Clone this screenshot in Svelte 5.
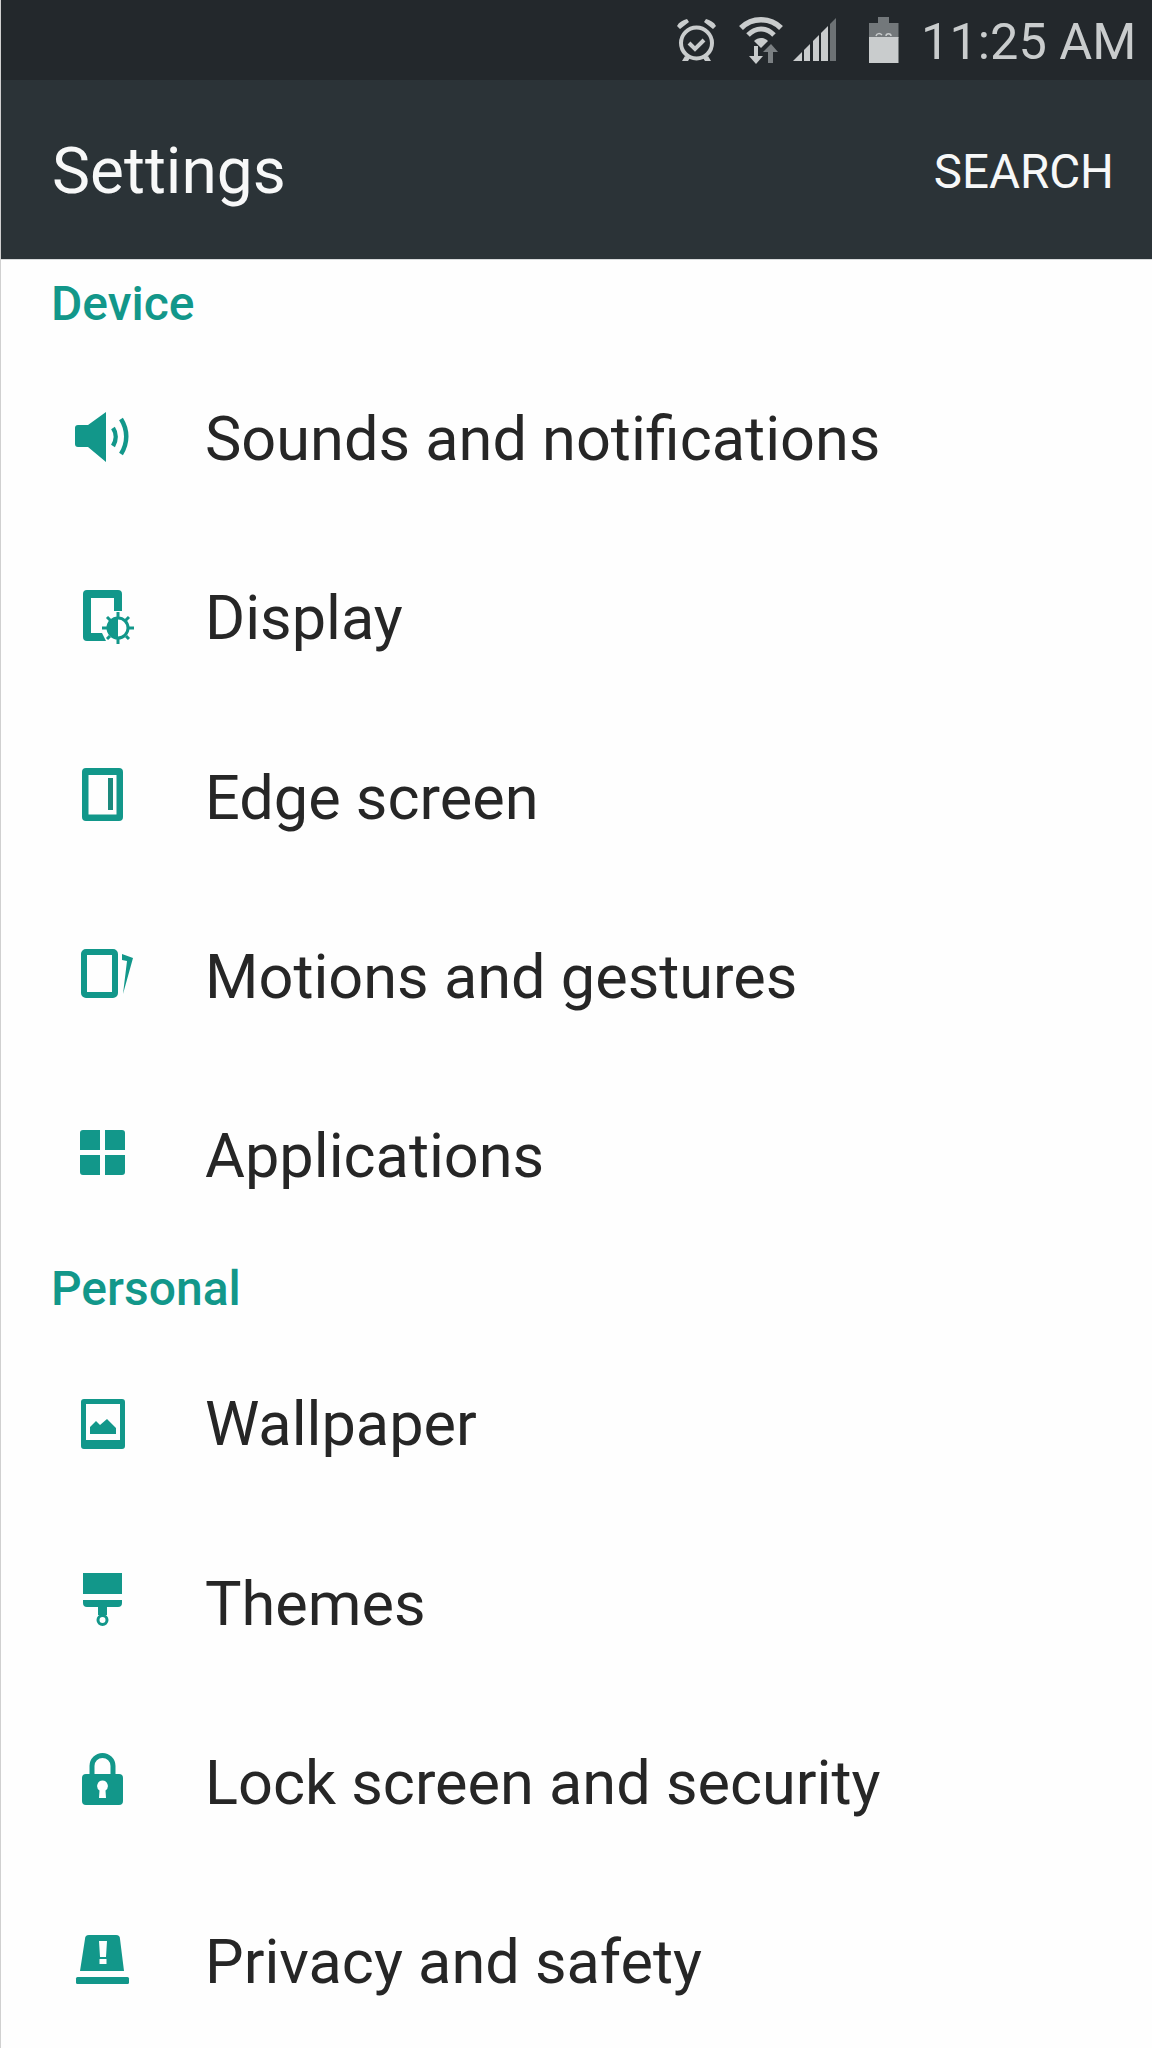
<script>
  // settings rows, grouped by category
  const groups = [
    {
      title: 'Device',
      rows: [
        { icon: 'sound', label: 'Sounds and notifications' },
        { icon: 'display', label: 'Display' },
        { icon: 'edge', label: 'Edge screen' },
        { icon: 'motion', label: 'Motions and gestures' },
        { icon: 'apps', label: 'Applications' }
      ]
    },
    {
      title: 'Personal',
      rows: [
        { icon: 'wallpaper', label: 'Wallpaper' },
        { icon: 'themes', label: 'Themes' },
        { icon: 'lock', label: 'Lock screen and security' },
        { icon: 'privacy', label: 'Privacy and safety' }
      ]
    }
  ];
</script>

<div class="screen">
  <div class="statusbar">
    <!-- alarm -->
    <svg class="st alarm" viewBox="0 0 40 44" width="40" height="44">
      <circle cx="19.500" cy="25" r="15.500" fill="none" stroke="currentColor" stroke-width="4" />
      <path d="M12 25l6 6 9-9" fill="none" stroke="currentColor" stroke-width="4" />
      <path d="M0 8C2 4 6 2 10 1l2 3-9 7zM39 8C37 4 33 2 29 1l-2 3 9 7z" fill="currentColor" />
      <path d="M8 38l-3 5h6l2-3zM31 38l3 5h-6l-2-3z" fill="currentColor" />
    </svg>
    <!-- wifi with up/down arrows -->
    <svg class="st wifi" viewBox="0 0 46 48" width="46" height="48">
      <path d="M3 12C14 1 32 1 43 12" fill="none" stroke="currentColor" stroke-width="5.500" />
      <path d="M10 19C18 11 28 11 36 19" fill="none" stroke="currentColor" stroke-width="5" />
      <path d="M16 25C20 21 26 21 30 25l-7 7z" fill="currentColor" />
      <path d="M16 30h4v10h5l-7 8-7-8h5z" fill="currentColor" />
      <path d="M30 47V36h-5l8-8 7 8h-5v11z" fill="#7b8083" />
    </svg>
    <!-- signal -->
    <svg class="st signal" viewBox="0 0 44 44" width="44" height="44">
      <path d="M0 43L9 34V43z" fill="currentColor" />
      <path d="M11 43V32L17 26V43z" fill="currentColor" />
      <path d="M20 43V23L26 17V43z" fill="currentColor" />
      <path d="M28 43V15L35 8V43z" fill="currentColor" />
      <path d="M37 43V6L43 0V43z" fill="#6d7275" />
    </svg>
    <!-- battery -->
    <svg class="st battery" viewBox="0 0 30 46" width="30" height="46">
      <path d="M9 0h11v6h9.500v15H0V6h9z" fill="#73787b" />
      <path d="M0 20h29.500v26H0z" fill="currentColor" />
      <path d="M7 19c1-3 4-3 6-1M17 19c0-3 5-3 5 0" fill="none" stroke="currentColor" stroke-width="1.500" />
    </svg>
    <span class="time">11:25 AM</span>
  </div>

  <div class="toolbar">
    <span class="title">Settings</span>
    <span class="search">SEARCH</span>
  </div>

  <div class="list">
    {#each groups as group}
      <div class="category">{group.title}</div>
      {#each group.rows as row}
        <div class="row">
          <svg class="icon" viewBox="0 0 80 80" width="80" height="80">
            {#if row.icon === 'sound'}
              <path d="M11 29a3 3 0 0 1 3-3H24L42 13V63L24 48H14a3 3 0 0 1-3-3z" />
              <path d="M49 29c3.500 5 3.500 12 0 18M57 20c7 11 7 24 0 35" fill="none" stroke="currentColor" stroke-width="4.500" />
            {:else if row.icon === 'display'}
              <path d="M23 12H54a4 4 0 0 1 4 4V33H50V20H27V55H38L42 63H23a4 4 0 0 1-4-4V16a4 4 0 0 1 4-4z" />
              <circle cx="54" cy="50" r="10" fill="#fff" stroke="currentColor" stroke-width="3" />
              <path d="M54 40a10 10 0 0 0 0 20z" />
              <path d="M54 34v32M38 50h32M43 39l22 22M65 39L43 61" fill="none" stroke="currentColor" stroke-width="3" stroke-dasharray="5 22" />
            {:else if row.icon === 'edge'}
              <path fill-rule="evenodd" d="M22 11H55a4 4 0 0 1 4 4V60a4 4 0 0 1-4 4H22a4 4 0 0 1-4-4V15a4 4 0 0 1 4-4zM24.500 18V57.500H52.500V18z" />
              <rect x="44" y="21" width="5" height="32" fill="#1c8a7d" />
            {:else if row.icon === 'motion'}
              <rect x="20" y="16" width="31" height="43" rx="2" fill="none" stroke="currentColor" stroke-width="6" />
              <path d="M58 18L69 22 59 58 63 25 58 24z" />
            {:else if row.icon === 'apps'}
              <path d="M19 14H36V34H16V17a3 3 0 0 1 3-3zM41 14H58a3 3 0 0 1 3 3V34H41zM16 39H36V59H19a3 3 0 0 1-3-3zM41 39H61V56a3 3 0 0 1-3 3H41z" />
            {:else if row.icon === 'wallpaper'}
              <path fill-rule="evenodd" d="M20 15H58a3 3 0 0 1 3 3V62a3 3 0 0 1-3 3H20a3 3 0 0 1-3-3V18a3 3 0 0 1 3-3zM22 20V56H56V20z" />
              <path d="M26 50V43L32 37 36 41 43 35 52 44V50z" />
            {:else if row.icon === 'themes'}
              <path d="M19 10H58V31H19zM19 37H58V40a4 4 0 0 1-4 4H43V52H34V44H23a4 4 0 0 1-4-4z" />
              <circle cx="38.500" cy="57" r="4.500" fill="#fff" stroke="currentColor" stroke-width="3" />
            {:else if row.icon === 'lock'}
              <path d="M28 33V24a10.500 10.500 0 0 1 21 0V33" fill="none" stroke="currentColor" stroke-width="5" />
              <path fill-rule="evenodd" d="M22 32H55a4 4 0 0 1 4 4V59a4 4 0 0 1-4 4H22a4 4 0 0 1-4-4V36a4 4 0 0 1 4-4zM38.500 38.500a5.500 5.500 0 0 0-3 10L35 56H42L41.500 48.500a5.500 5.500 0 0 0-3-10z" />
            {:else if row.icon === 'privacy'}
              <path fill-rule="evenodd" d="M25 13H52a4 4 0 0 1 4 4L60 49H16L21 17a4 4 0 0 1 4-4zM35 19L36 35H42L43 19zM35.500 37V42H42.500V37z" />
              <rect x="12" y="55" width="53" height="7" rx="1.500" />
            {/if}
          </svg>
          <span class="label">{row.label}</span>
        </div>
      {/each}
    {/each}
  </div>
</div>

<style>
  :global(body) {
    margin: 0;
    background: #fff;
  }

  .screen {
    width: 1152px;
    height: 2048px;
    overflow: hidden;
    font-family: Roboto, "Liberation Sans", sans-serif;
    border-left: 1px solid #d0d0d0;
    box-sizing: border-box;
    background: #fefefe;
  }

  .statusbar {
    height: 80px;
    margin-left: -1px;
    background: #23282c;
    color: #c9cccd;
    display: flex;
    align-items: center;
    padding-left: 677px;
    box-sizing: border-box;
  }

  .st {
    display: block;
    flex: none;
  }
  .wifi { margin-left: 21px; }
  .signal { margin-left: 9px; }
  .battery { margin-left: 32px; }

  .time {
    margin-left: 22px;
    padding-top: 3px;
    font-size: 50.500px;
    white-space: nowrap;
  }

  .toolbar {
    height: 180px;
    margin-left: -1px;
    background: #2b3337;
    color: #f7f8f8;
    display: flex;
    align-items: center;
    justify-content: space-between;
    padding: 0 38px 0 52px;
    box-sizing: border-box;
    border-bottom: 1px solid #d8dadb;
  }

  .title {
    padding-top: 4px;
    font-size: 64px;
  }

  .search {
    padding-top: 4px;
    font-size: 47.500px;
  }

  .category {
    height: 89px;
    padding: 18px 0 0 50px;
    box-sizing: border-box;
    color: #12978a;
    font-size: 48px;
    font-weight: 500;
    line-height: 52px;
  }

  .row {
    height: 179.250px;
    display: flex;
    align-items: center;
    color: #262626;
  }

  .icon {
    flex: none;
    margin-left: 63px;
    fill: #12978a;
    color: #12978a;
  }

  .label {
    margin-left: 61px;
    padding-top: 1px;
    font-size: 61.250px;
    white-space: nowrap;
  }
</style>
